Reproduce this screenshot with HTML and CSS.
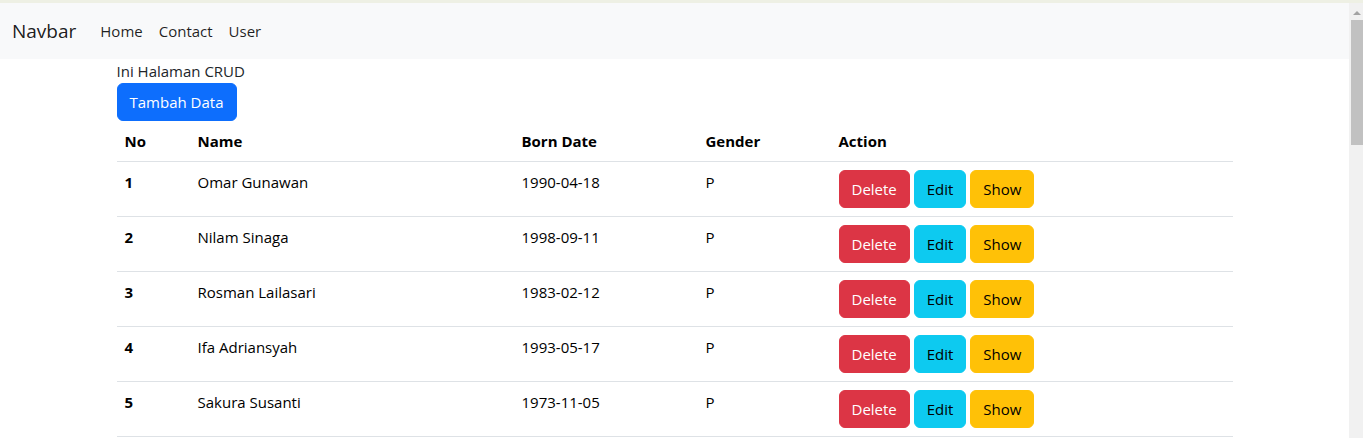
FILE: index.html
```html
<!DOCTYPE html>
<html lang="id">
<head>
<meta charset="utf-8">
<title>CRUD</title>
<link rel="stylesheet" href="styles.css">
</head>
<body>
<div class="topline"></div>
<div class="frame">
  <div class="page">
    <nav class="navbar">
      <a class="navbar-brand" href="#">Navbar</a>
      <ul class="navbar-nav">
        <li><a class="nav-link" href="#">Home</a></li>
        <li><a class="nav-link" href="#">Contact</a></li>
        <li><a class="nav-link" href="#">User</a></li>
      </ul>
    </nav>
    <main class="container">
      <div class="title">Ini Halaman CRUD</div>
      <a class="btn btn-primary" href="#">Tambah Data</a>
      <table class="table">
        <thead>
          <tr>
            <th class="col-no">No</th>
            <th class="col-name">Name</th>
            <th class="col-date">Born Date</th>
            <th class="col-gender">Gender</th>
            <th class="col-action">Action</th>
          </tr>
        </thead>
        <tbody>
          <tr>
            <th>1</th><td>Omar Gunawan</td><td>1990-04-18</td><td>P</td>
            <td><a class="btn btn-danger" href="#">Delete</a> <a class="btn btn-info" href="#">Edit</a> <a class="btn btn-warning" href="#">Show</a></td>
          </tr>
          <tr>
            <th>2</th><td>Nilam Sinaga</td><td>1998-09-11</td><td>P</td>
            <td><a class="btn btn-danger" href="#">Delete</a> <a class="btn btn-info" href="#">Edit</a> <a class="btn btn-warning" href="#">Show</a></td>
          </tr>
          <tr>
            <th>3</th><td>Rosman Lailasari</td><td>1983-02-12</td><td>P</td>
            <td><a class="btn btn-danger" href="#">Delete</a> <a class="btn btn-info" href="#">Edit</a> <a class="btn btn-warning" href="#">Show</a></td>
          </tr>
          <tr>
            <th>4</th><td>Ifa Adriansyah</td><td>1993-05-17</td><td>P</td>
            <td><a class="btn btn-danger" href="#">Delete</a> <a class="btn btn-info" href="#">Edit</a> <a class="btn btn-warning" href="#">Show</a></td>
          </tr>
          <tr>
            <th>5</th><td>Sakura Susanti</td><td>1973-11-05</td><td>P</td>
            <td><a class="btn btn-danger" href="#">Delete</a> <a class="btn btn-info" href="#">Edit</a> <a class="btn btn-warning" href="#">Show</a></td>
          </tr>
        </tbody>
      </table>
    </main>
  </div>
  <div class="scrollbar">
    <div class="scroll-arrow"></div>
    <div class="scroll-thumb"></div>
  </div>
</div>
</body>
</html>
```

FILE: styles.css
```css
html, body {
  margin: 0;
  height: 100%;
  overflow: hidden;
}

body {
  display: flex;
  flex-direction: column;
  font-family: "Open Sans", "Noto Sans", sans-serif;
  font-size: 15px;
  line-height: 24px;
  color: #212529;
  background: #fff;
}

.topline {
  height: 3px;
  flex: none;
  background: #eef0e4;
}

.frame {
  flex: 1;
  min-height: 0;
  display: flex;
}

.page {
  flex: 1;
  min-width: 0;
  overflow: hidden;
}

/* scrollbar imitation */
.scrollbar {
  width: 14px;
  flex: none;
  background: #f1f1f1;
  display: flex;
  flex-direction: column;
  align-items: flex-end;
}

.scroll-arrow {
  align-self: flex-start;
  margin: 8px 0 0 4px;
  width: 0;
  height: 0;
  border-left: 4px solid transparent;
  border-right: 4px solid transparent;
  border-bottom: 4px solid #a3a3a3;
}

.scroll-thumb {
  margin-top: 5px;
  width: 12px;
  height: 125px;
  background: #c1c1c1;
}

/* navbar */
.navbar {
  display: flex;
  align-items: center;
  height: 56px;
  padding: 0 12px;
  box-sizing: border-box;
  background: #f8f9fa;
}

.navbar-brand {
  font-size: 19px;
  line-height: 30px;
  margin-right: 16px;
  color: rgba(0, 0, 0, 0.9);
  text-decoration: none;
}

.navbar-nav {
  display: flex;
  list-style: none;
  margin: 0;
  padding: 0;
}

.nav-link {
  display: block;
  padding: 8px;
  color: rgba(0, 0, 0, 0.88);
  text-decoration: none;
}

/* content */
.container {
  display: block;
  max-width: 1140px;
  margin: 0 auto;
  padding: 0 12px;
  box-sizing: border-box;
}

.title {
  margin: 0;
}

.btn {
  display: inline-block;
  padding: 6px 12px;
  border: 1px solid transparent;
  border-radius: 6px;
  font-size: 15px;
  line-height: 24px;
  text-decoration: none;
  vertical-align: middle;
}

.btn-primary {
  background: #0d6efd;
  border-color: #0d6efd;
  color: #fff;
}

.btn-danger {
  background: #dc3545;
  border-color: #dc3545;
  color: #fff;
}

.btn-info {
  background: #0dcaf0;
  border-color: #0dcaf0;
  color: #000;
}

.btn-warning {
  background: #ffc107;
  border-color: #ffc107;
  color: #000;
}

.table {
  width: 100%;
  border-collapse: collapse;
  table-layout: fixed;
  margin-bottom: 16px;
  color: #212529;
}

.table th,
.table td {
  padding: 8px;
  border-bottom: 1px solid #dee2e6;
  text-align: left;
  vertical-align: top;
}

.table th {
  font-weight: 700;
  color: #000;
}

.table td {
  color: #000;
}

.col-no { width: 57px; }
.col-name { width: 308px; }
.col-date { width: 168px; }
.col-gender { width: 117px; }
.col-action { width: auto; }
```
